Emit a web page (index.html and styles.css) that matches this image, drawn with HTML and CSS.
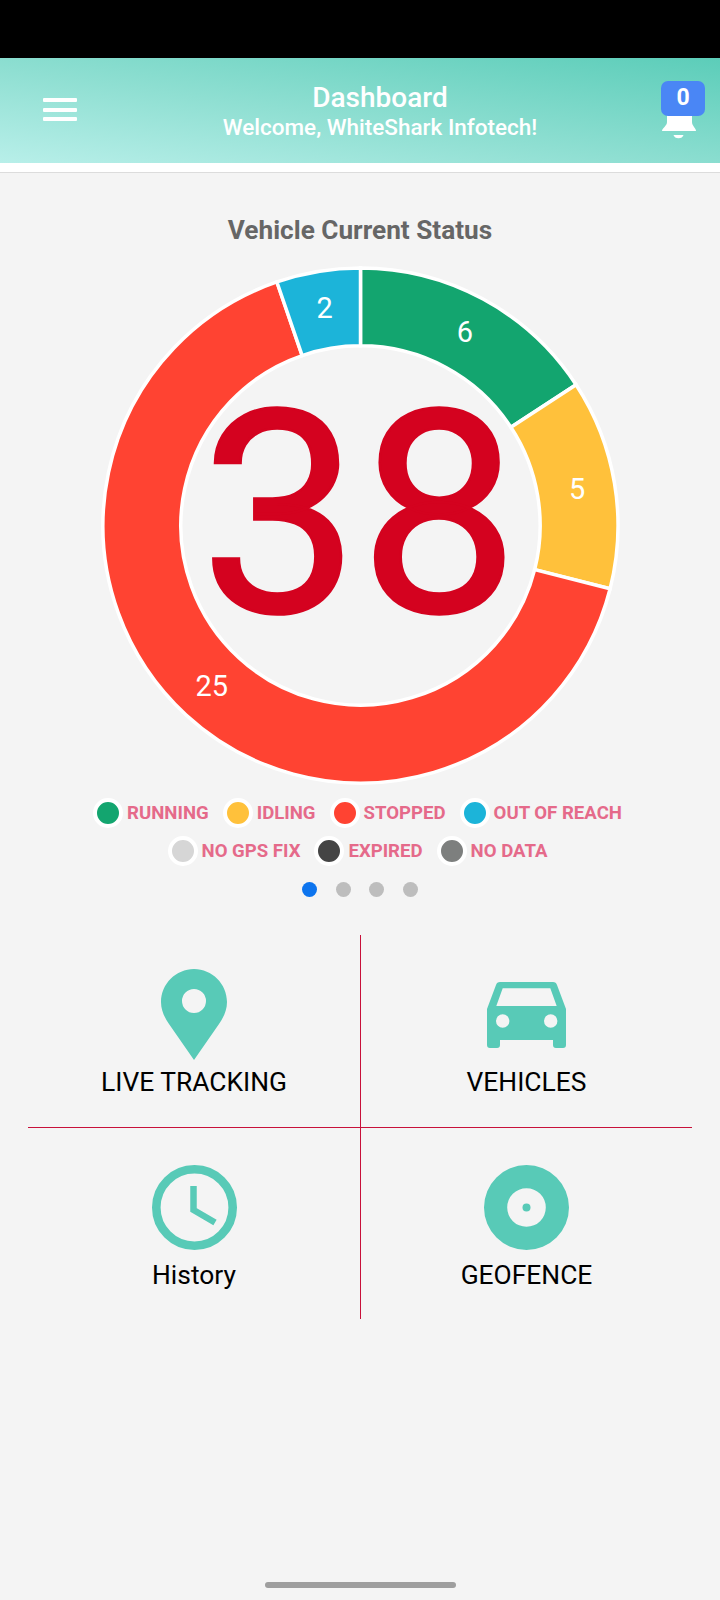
FILE: index.html
```html
<!DOCTYPE html>
<html lang="en">
<head>
<meta charset="utf-8">
<title>Dashboard</title>
<link rel="stylesheet" href="styles.css">
</head>
<body>
<div class="page">
  <div class="status-bar"></div>
  <header class="app-header">
    <div class="menu-icon"><span></span><span></span><span></span></div>
    <div class="header-titles">
      <div class="header-title">Dashboard</div>
      <div class="header-subtitle">Welcome, WhiteShark Infotech!</div>
    </div>
    <div class="bell-wrap">
      <svg class="bell-icon" viewBox="0 0 34 29" aria-hidden="true">
        <path d="M5 0H30V12C30 16 34 18 34 21H0C0 18 5 16 5 12Z"/>
        <path d="M11.5 25H21.5C21 27 19 28.3 16.5 28.3S12 27 11.5 25Z"/>
      </svg>
      <div class="bell-badge">0</div>
    </div>
  </header>
  <div class="header-strip"></div>

  <main class="content">
    <h1 class="chart-title">Vehicle Current Status</h1>
    <svg class="donut" viewBox="0 0 520 520" role="img" aria-label="Vehicle status chart">
      <path class="seg seg-green" d="M260 2A258 258 0 0 1 476 118.9L410.7 161.56A180 180 0 0 0 260 80Z"/>
      <path class="seg seg-yellow" d="M476 118.9A258 258 0 0 1 510.1 323.34L434.49 304.19A180 180 0 0 0 410.7 161.56Z"/>
      <path class="seg seg-red" d="M510.1 323.34A258 258 0 1 1 176.23 15.98L201.55 89.76A180 180 0 1 0 434.49 304.19Z"/>
      <path class="seg seg-blue" d="M176.23 15.98A258 258 0 0 1 260 2L260 80A180 180 0 0 0 201.55 89.76Z"/>
      <text class="seg-label" x="364.6" y="76.6">6</text>
      <text class="seg-label" x="477" y="233">5</text>
      <text class="seg-label" x="111" y="430.6">25</text>
      <text class="seg-label" x="224" y="52.5">2</text>
      <text class="total" x="259" y="346.5">38</text>
    </svg>

    <div class="legend">
      <div class="legend-row">
        <div class="legend-item"><span class="swatch sw-running"></span>RUNNING</div>
        <div class="legend-item"><span class="swatch sw-idling"></span>IDLING</div>
        <div class="legend-item"><span class="swatch sw-stopped"></span>STOPPED</div>
        <div class="legend-item"><span class="swatch sw-reach"></span>OUT OF REACH</div>
      </div>
      <div class="legend-row">
        <div class="legend-item"><span class="swatch sw-nogps"></span>NO GPS FIX</div>
        <div class="legend-item"><span class="swatch sw-expired"></span>EXPIRED</div>
        <div class="legend-item"><span class="swatch sw-nodata"></span>NO DATA</div>
      </div>
    </div>

    <div class="pager">
      <span class="pager-dot active"></span>
      <span class="pager-dot"></span>
      <span class="pager-dot"></span>
      <span class="pager-dot"></span>
    </div>

    <div class="tiles">
      <div class="tile tile-top tile-left">
        <div class="tile-icon">
          <svg class="icon-pin" viewBox="0 0 66 91" aria-hidden="true"><path fill-rule="evenodd" d="M33 0C15 0 0 15 0 33C0 42 4 49 8 55L33 91L58 55C62 49 66 42 66 33C66 15 51 0 33 0ZM33 20a12 12 0 1 1 0 24a12 12 0 1 1 0-24Z"/></svg>
        </div>
        <div class="tile-label">LIVE TRACKING</div>
      </div>
      <div class="tile tile-top">
        <div class="tile-icon">
          <svg class="icon-car" viewBox="0 0 79 66" aria-hidden="true"><path fill-rule="evenodd" d="M13 0H66C68 0 69.5 1.2 70 3L79 27V63C79 65 78 66 76 66H69C67 66 66 65 66 63V58H13V63C13 65 12 66 10 66H3C1 66 0 65 0 63V27L9 3C9.5 1.2 11 0 13 0ZM15.7 6.3L9.3 24H69.7L63.3 6.3ZM15.7 32.3a6.7 6.7 0 1 0 0 13.4a6.7 6.7 0 1 0 0-13.4ZM63.7 32.3a6.7 6.7 0 1 0 0 13.4a6.7 6.7 0 1 0 0-13.4Z"/></svg>
        </div>
        <div class="tile-label">VEHICLES</div>
      </div>
      <div class="tile tile-bottom tile-left">
        <div class="tile-icon">
          <svg class="icon-round" viewBox="0 0 85 85" aria-hidden="true">
            <circle class="clock-ring" cx="42.5" cy="42.5" r="38.2"/>
            <path class="clock-hands" d="M41.5 21V45L63 57.5"/>
          </svg>
        </div>
        <div class="tile-label">History</div>
      </div>
      <div class="tile tile-bottom">
        <div class="tile-icon">
          <svg class="icon-round" viewBox="0 0 85 85" aria-hidden="true">
            <path fill-rule="evenodd" d="M42.5 0a42.5 42.5 0 1 0 0 85a42.5 42.5 0 1 0 0-85zM42.5 23.2a19.3 19.3 0 1 1 0 38.6a19.3 19.3 0 1 1 0-38.6z"/>
            <circle cx="42.5" cy="42.5" r="4"/>
          </svg>
        </div>
        <div class="tile-label">GEOFENCE</div>
      </div>
    </div>
  </main>

  <div class="home-indicator"></div>
</div>
</body>
</html>
```

FILE: styles.css
```css
* { box-sizing: border-box; }

html, body {
  margin: 0;
  padding: 0;
  background: #f4f4f4;
}

body {
  font-family: Roboto, "Liberation Sans", sans-serif;
}

.page {
  width: 720px;
  height: 1600px;
  display: flex;
  flex-direction: column;
  overflow: hidden;
}

.status-bar {
  height: 58px;
  background: #000;
  flex: none;
}

.app-header {
  height: 105px;
  flex: none;
  display: flex;
  align-items: flex-start;
  padding-left: 43px;
  background: linear-gradient(to top right, #b8efe9 0%, #8fdfd2 45%, #5ccdb9 100%);
}

.menu-icon {
  width: 34px;
  margin-top: 40px;
  display: flex;
  flex-direction: column;
  gap: 5.5px;
}

.menu-icon span {
  height: 4px;
  background: #fff;
  border-radius: 1px;
}

.header-titles {
  flex: 1;
  margin-left: 22px;
  padding-top: 24px;
  text-align: center;
  color: #fff;
}

.header-title {
  font-size: 28px;
  font-weight: 500;
  line-height: 32px;
}

.header-subtitle {
  font-size: 22.5px;
  font-weight: 500;
  line-height: 26px;
}

.bell-wrap {
  width: 44px;
  margin: 23px 15px 0 0;
  position: relative;
  padding-top: 29px;
}

.bell-icon {
  display: block;
  width: 34px;
  height: 29px;
  margin-left: 1px;
  fill: #fff;
}

.bell-badge {
  position: absolute;
  top: 0;
  left: 0;
  width: 44px;
  height: 35px;
  border-radius: 7px;
  background: #4a86f5;
  color: #fff;
  font-size: 23px;
  font-weight: 700;
  line-height: 34px;
  text-align: center;
}

.header-strip {
  height: 10px;
  flex: none;
  background: #fff;
  border-bottom: 1px solid #dcdcdc;
}

.content {
  flex: none;
}

.chart-title {
  margin: 41px 0 0;
  font-size: 26.2px;
  font-weight: 700;
  line-height: 32px;
  text-align: center;
  color: #666666;
}

.donut {
  display: block;
  width: 519px;
  height: 519px;
  margin: 20px auto 0;
}

.seg {
  stroke: #fff;
  stroke-width: 3.5;
}

.seg-green { fill: #13a56f; }
.seg-yellow { fill: #ffc13b; }
.seg-red { fill: #ff4332; }
.seg-blue { fill: #1cb4d9; }

.seg-label {
  fill: #fff;
  font-size: 29px;
  text-anchor: middle;
}

.total {
  fill: #d4021f;
  stroke: #d4021f;
  stroke-width: 2.5;
  font-size: 284px;
  text-anchor: middle;
}

.legend {
  margin-top: 13px;
  padding-right: 5px;
  display: flex;
  flex-direction: column;
  gap: 8px;
}

.legend-row {
  display: flex;
  justify-content: center;
  gap: 14px;
}

.legend-item {
  display: flex;
  align-items: center;
  gap: 4px;
  height: 30px;
  font-size: 18.6px;
  font-weight: 700;
  color: #e56a8a;
}

.swatch {
  width: 30px;
  height: 30px;
  border-radius: 50%;
  border: 4px solid #fff;
}

.sw-running { background: #13a56f; }
.sw-idling { background: #ffc13b; }
.sw-stopped { background: #ff4332; }
.sw-reach { background: #1cb4d9; }
.sw-nogps { background: #d6d6d6; }
.sw-expired { background: #444444; }
.sw-nodata { background: #7d7f7e; }

.pager {
  margin-top: 16px;
  display: flex;
  justify-content: center;
  gap: 18.5px;
  height: 15px;
}

.pager-dot {
  width: 15px;
  height: 15px;
  border-radius: 50%;
  background: #bdbdbd;
}

.pager-dot.active { background: #0d74ee; }

.tiles {
  margin: 38px 28px 0;
  display: grid;
  grid-template-columns: 333px 331px;
  grid-template-rows: 193px 191px;
}

.tile {
  display: flex;
  flex-direction: column;
  align-items: center;
  color: #000;
}

.tile-left { border-right: 1px solid #c8103a; }
.tile-top { border-bottom: 1px solid #c8103a; padding-top: 34px; }
.tile-bottom { padding-top: 37px; }

.tile-icon {
  display: flex;
  align-items: center;
  justify-content: center;
  fill: #58cab7;
}

.tile-top .tile-icon { height: 91px; }
.tile-bottom .tile-icon { height: 85px; }

.icon-pin { display: block; width: 66px; height: 91px; }
.icon-car { display: block; width: 79px; height: 66px; }
.icon-round { display: block; width: 85px; height: 85px; }

.clock-ring {
  fill: none;
  stroke: #58cab7;
  stroke-width: 8.6;
}

.clock-hands {
  fill: none;
  stroke: #58cab7;
  stroke-width: 6.5;
}

.tile-label {
  margin-top: 7px;
  font-size: 26.4px;
  line-height: 30px;
}

.tile-bottom .tile-label { margin-top: 10px; }

.home-indicator {
  width: 191px;
  height: 6px;
  margin: auto auto 12px;
  border-radius: 3px;
  background: #9e9e9e;
}
```
